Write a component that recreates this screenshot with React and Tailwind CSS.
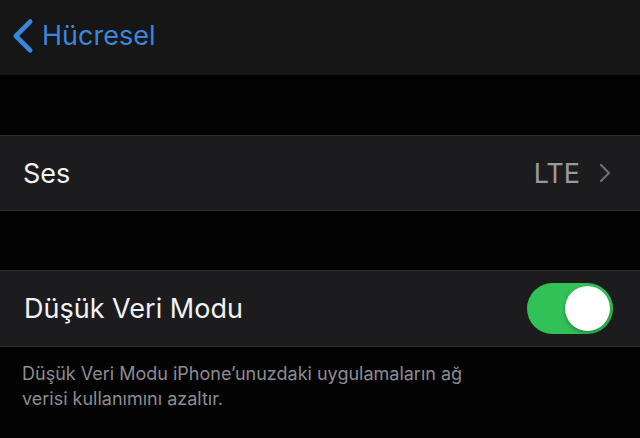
const rows = {
  voice: { label: "Ses", value: "LTE" },
  lowData: { label: "Düşük Veri Modu" },
};

const Chevron = ({ className, width = 2.6 }) => (
  <svg viewBox="0 0 12 20" className={className} fill="none" stroke="currentColor" strokeWidth={width} strokeLinecap="round" strokeLinejoin="round">
    <path d="M10 2 L2 10 L10 18" />
  </svg>
);

const Toggle = ({ on }) => (
  <div className={`flex h-[51px] w-[86px] items-center rounded-full p-[3px] ${on ? "justify-end bg-[#31c157]" : "justify-start bg-[#39393d]"}`}>
    <div className="h-[45px] w-[45px] rounded-full bg-white shadow-[0_2px_4px_rgba(0,0,0,0.3)]" />
  </div>
);

export default function App() {
  return (
    <div className="h-[438px] w-[640px] overflow-hidden bg-[#030303] font-['Inter','Liberation_Sans',sans-serif]">
      <header className="flex h-[75px] items-center bg-[#161617] pl-[12px] text-[#3a86dc]">
        <Chevron className="h-[36px] w-[22px] -translate-y-[2px]" />
        <span className="ml-[8px] -translate-y-[2px] text-[27px] leading-none">Hücresel</span>
      </header>

      <div className="h-[60px]" />

      <div className="flex h-[76px] items-center justify-between border-y border-[#2c2c2e] bg-[#1c1c1e] pl-[23px] pr-[29px]">
        <span className="text-[27px] leading-none text-[#f2f2f4]">{rows.voice.label}</span>
        <div className="flex items-center gap-[19px]">
          <span className="text-[27px] leading-none text-[#9a9a9e]">{rows.voice.value}</span>
          <Chevron className="h-[20px] w-[12px] rotate-180 text-[#6e6e72]" width={2.2} />
        </div>
      </div>

      <div className="h-[59px]" />

      <div className="flex h-[77px] items-center justify-between border-y border-[#2c2c2e] bg-[#1c1c1e] pl-[24px] pr-[27px]">
        <span className="text-[27px] leading-none text-[#f2f2f4]">{rows.lowData.label}</span>
        <Toggle on />
      </div>

      <p className="max-w-[500px] pl-[22px] pt-[14px] text-[18px] leading-[25px] text-[#8c8c90]">
        Düşük Veri Modu iPhone’unuzdaki uygulamaların ağ verisi kullanımını azaltır.
      </p>
    </div>
  );
}
